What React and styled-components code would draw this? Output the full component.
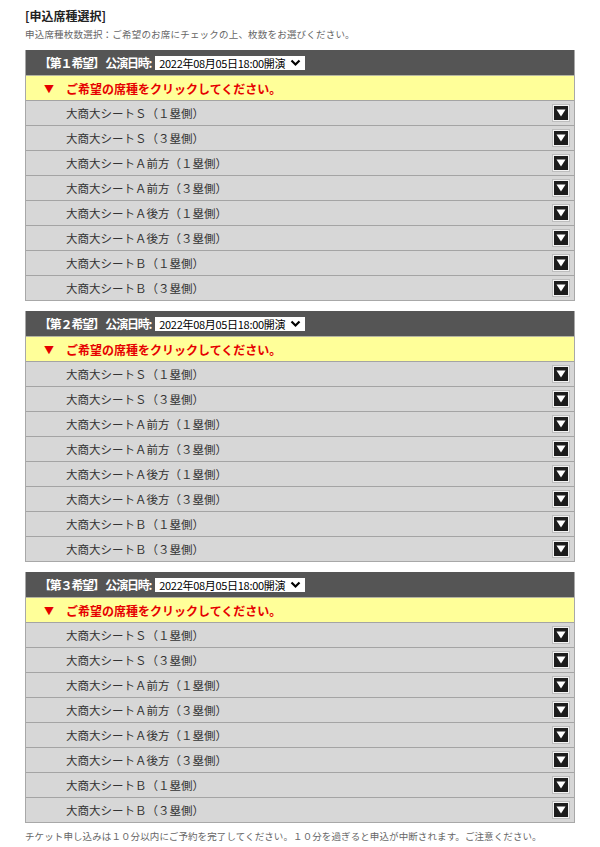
import React from 'react';
import styled, { createGlobalStyle } from 'styled-components';

const GlobalStyle = createGlobalStyle`
  body {
    margin: 0;
    background: #fff;
    font-family: "Noto Sans CJK JP", "Noto Sans", sans-serif;
    color: #333;
  }
`;

const Page = styled.div`
  width: 550px;
  padding: 7px 25px 0;
`;

const Title = styled.h2`
  margin: 0;
  font-size: 12px;
  line-height: 18px;
  font-weight: bold;
  color: #222;
`;

const Lead = styled.p`
  margin: 2px 0 0;
  font-size: 9.5px;
  line-height: 14px;
  color: #666;
  letter-spacing: 0.2px;
`;

const Panel = styled.section`
  margin-top: ${p => (p.first ? '9px' : '10px')};
  border: 1px solid #a8a8a8;
  border-top: none;
`;

const PanelHead = styled.div`
  display: flex;
  align-items: center;
  height: 25px;
  background: #555555;
  padding-left: 13px;
  color: #fff;
  font-size: 12px;
  font-weight: bold;
`;

const Label = styled.span`
  margin-right: 4px;
  letter-spacing: -1.2px;
`;

const DateSelect = styled.div`
  display: flex;
  align-items: center;
  height: 14px;
  padding: 0 4px 0 4px;
  background: #fff;
  color: #000;
  font-size: 11px;
  font-weight: normal;
  letter-spacing: -0.3px;
  svg {
    margin-left: 5px;
  }
`;

const Notice = styled.div`
  display: flex;
  align-items: center;
  height: 24px;
  background: #ffff99;
  border-top: 1px solid #b5b5a0;
  color: #e60000;
  font-size: 12px;
  font-weight: bold;
  padding-left: 18px;
  span:first-child {
    font-size: 10px;
    width: 22px;
  }
`;

const Row = styled.div`
  display: flex;
  align-items: center;
  justify-content: space-between;
  height: 24px;
  background: #d7d7d7;
  border-top: 1px solid #a4a4a4;
  padding: 0 5px 0 40px;
  font-size: 11.5px;
  color: #333;
`;

const Toggle = styled.span`
  display: flex;
  align-items: center;
  justify-content: center;
  width: 14px;
  height: 14px;
  background: #1c1c1c;
  border: 1px solid #f2f2f2;
  box-shadow: 0 0 0 1px #bdbdbd;
`;

const Footer = styled.p`
  margin: 6px 0 0;
  font-size: 9.5px;
  line-height: 14px;
  color: #666;
  letter-spacing: 0.1px;
`;

const seats = [
  '大商大シートＳ（１塁側）',
  '大商大シートＳ（３塁側）',
  '大商大シートＡ前方（１塁側）',
  '大商大シートＡ前方（３塁側）',
  '大商大シートＡ後方（１塁側）',
  '大商大シートＡ後方（３塁側）',
  '大商大シートＢ（１塁側）',
  '大商大シートＢ（３塁側）',
];

const Chevron = () => (
  <svg width="11" height="8" viewBox="0 0 11 8">
    <path d="M1.5 1.5 L5.5 5.5 L9.5 1.5" fill="none" stroke="#000" strokeWidth="2.2" />
  </svg>
);

const DownIcon = () => (
  <Toggle>
    <svg width="10" height="8" viewBox="0 0 10 8">
      <path d="M0.5 0.5 H9.5 L5 7.5 Z" fill="#fff" />
    </svg>
  </Toggle>
);

const Choice = ({ num, first }) => (
  <Panel first={first}>
    <PanelHead>
      <Label>【第{num}希望】 公演日時:</Label>
      <DateSelect>
        2022年08月05日18:00開演
        <Chevron />
      </DateSelect>
    </PanelHead>
    <Notice>
      <span>▼</span>
      <span>ご希望の席種をクリックしてください。</span>
    </Notice>
    {seats.map(s => (
      <Row key={s}>
        <span>{s}</span>
        <DownIcon />
      </Row>
    ))}
  </Panel>
);

export default function App() {
  return (
    <>
      <GlobalStyle />
      <Page>
        <Title>[申込席種選択]</Title>
        <Lead>申込席種枚数選択：ご希望のお席にチェックの上、枚数をお選びください。</Lead>
        <Choice num="１" first />
        <Choice num="２" />
        <Choice num="３" />
        <Footer>
          チケット申し込みは１０分以内にご予約を完了してください。１０分を過ぎると申込が中断されます。ご注意ください。
        </Footer>
      </Page>
    </>
  );
}
